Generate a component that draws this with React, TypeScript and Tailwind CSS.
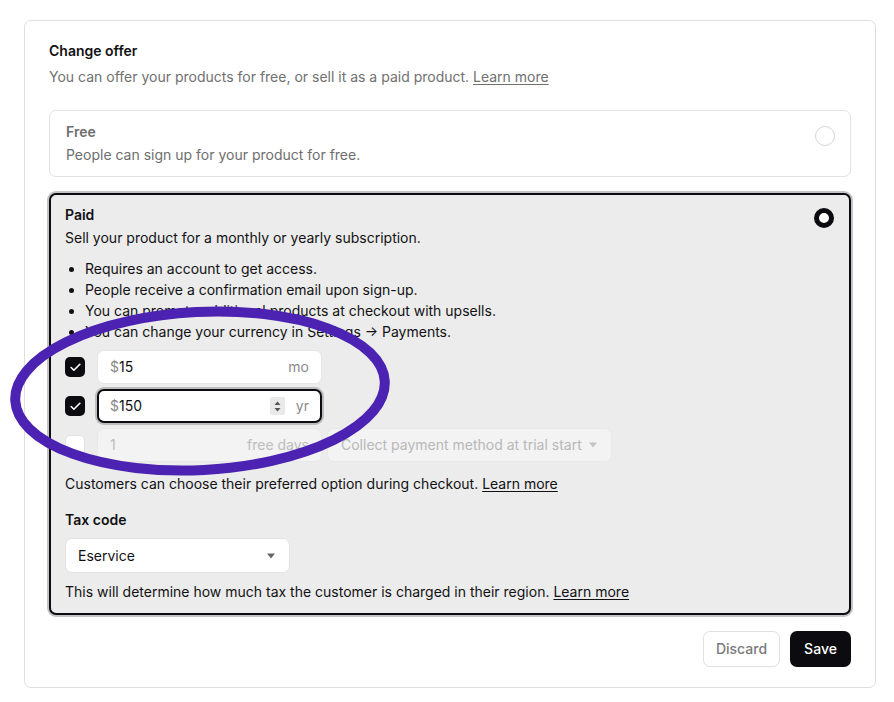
import { Check } from "lucide-react";

const Caret = ({ className }: { className?: string }) => (
  <svg width="10" height="6" viewBox="0 0 10 6" className={className}>
    <path d="M1 0.5h8L5 5.5z" fill="currentColor" />
  </svg>
);

const Spinner = () => (
  <div className="flex h-[18px] w-[15px] flex-col items-center justify-center gap-[3px] rounded-[2px] bg-[#e9e9e9]">
    <svg width="7" height="4" viewBox="0 0 7 4">
      <path d="M0.5 4L3.5 0.5 6.5 4z" fill="#555" />
    </svg>
    <svg width="7" height="4" viewBox="0 0 7 4">
      <path d="M0.5 0L3.5 3.5 6.5 0z" fill="#555" />
    </svg>
  </div>
);

const CheckBox = ({ checked }: { checked: boolean }) =>
  checked ? (
    <div className="flex h-5 w-5 shrink-0 items-center justify-center rounded-[5px] bg-[#0b0b10]">
      <Check size={13} strokeWidth={3} className="text-white" />
    </div>
  ) : (
    <div className="h-5 w-5 shrink-0 rounded-[5px] border border-[#e2e2e2] bg-white" />
  );

const App = () => {
  return (
    <div className="relative h-[702px] w-full bg-white pt-5 font-['Inter','Noto_Sans',sans-serif] text-[14px] leading-5 text-[#111113]">
      <div className="ml-6 w-[852px] rounded-[7px] border border-[#dedede] px-6 pb-5 pt-5">
        <h2 className="font-semibold">Change offer</h2>
        <p className="mt-[6px] text-[#707070]">
          You can offer your products for free, or sell it as a paid product.{" "}
          <a className="underline underline-offset-2">Learn more</a>
        </p>

        <div className="mt-[23px] flex items-start justify-between rounded-[7px] border border-[#e2e2e2] py-[11px] pl-4 pr-[15px]">
          <div>
            <div className="font-semibold text-[#6e6e6e]">Free</div>
            <div className="mt-[3px] text-[#6e6e6e]">People can sign up for your product for free.</div>
          </div>
          <div className="mt-[4px] h-5 w-5 rounded-full border border-[#d6d6d6] bg-white" />
        </div>

        <div className="mt-4 rounded-[7px] border-2 border-[#0b0b10] bg-[#ececec] px-[14px] pb-[11px] pt-[10px] ring-2 ring-[#c4c4c4]">
          <div className="flex items-start justify-between">
            <div>
              <div className="font-semibold">Paid</div>
              <div className="mt-[3px]">Sell your product for a monthly or yearly subscription.</div>
            </div>
            <div className="mr-[1px] mt-[3px] h-5 w-5 rounded-full border-[5px] border-[#0b0b10] bg-white" />
          </div>

          <ul className="mt-[10px] list-disc pl-5 leading-[21px]">
            <li>Requires an account to get access.</li>
            <li>People receive a confirmation email upon sign-up.</li>
            <li>You can promote additional products at checkout with upsells.</li>
            <li>You can change your currency in Settings → Payments.</li>
          </ul>

          <div className="mt-2 flex flex-col gap-[5px]">
            <div className="flex items-center gap-3">
              <CheckBox checked />
              <div className="flex h-[34px] w-[225px] items-center justify-between rounded-[7px] border border-[#e6e6e6] bg-white px-3">
                <span>
                  <span className="text-[#8a8a8a]">$</span>15
                </span>
                <span className="text-[#8a8a8a]">mo</span>
              </div>
            </div>
            <div className="flex items-center gap-3">
              <CheckBox checked />
              <div className="flex h-[34px] w-[225px] items-center rounded-[7px] border-2 border-[#0b0b10] bg-white pl-[11px] pr-[11px] ring-2 ring-[#bdbdbd]">
                <span className="flex-1">
                  <span className="text-[#8a8a8a]">$</span>150
                </span>
                <Spinner />
                <span className="ml-[11px] text-[#8a8a8a]">yr</span>
              </div>
            </div>
            <div className="flex items-center gap-3">
              <CheckBox checked={false} />
              <div className="flex h-[34px] w-[225px] items-center justify-between rounded-[7px] border border-[#e8e8e8] bg-[#f3f3f3] px-3 text-[#bdbdbd]">
                <span>1</span>
                <span>free days</span>
              </div>
              <div className="-ml-[7px] flex h-[34px] w-[285px] items-center justify-between rounded-[7px] border border-[#e8e8e8] bg-[#f3f3f3] pl-[13px] pr-[13px] text-[#b8b8b8]">
                <span>Collect payment method at trial start</span>
                <Caret className="text-[#c4c4c4]" />
              </div>
            </div>
          </div>

          <p className="mt-3">
            Customers can choose their preferred option during checkout.{" "}
            <a className="underline underline-offset-2">Learn more</a>
          </p>

          <div className="mt-4 font-semibold">Tax code</div>
          <div className="mt-2 flex h-[35px] w-[225px] items-center justify-between rounded-[7px] border border-[#e2e2e2] bg-white pl-3 pr-[13px]">
            <span>Eservice</span>
            <Caret className="text-[#666]" />
          </div>
          <p className="mt-[9px]">
            This will determine how much tax the customer is charged in their region.{" "}
            <a className="underline underline-offset-2">Learn more</a>
          </p>
        </div>

        <div className="mt-4 flex justify-end gap-[10px]">
          <button className="h-9 w-[77px] rounded-[7px] border border-[#e0e0e0] bg-white font-medium text-[#7a7a7a]">
            Discard
          </button>
          <button className="h-9 w-[61px] rounded-[7px] bg-[#0b0b10] font-medium text-white">Save</button>
        </div>
      </div>

      <svg
        className="pointer-events-none absolute left-0 top-0"
        width="894"
        height="702"
        viewBox="0 0 894 702"
      >
        <ellipse
          cx="200"
          cy="391"
          rx="185"
          ry="79"
          fill="none"
          stroke="#4b22b1"
          strokeWidth="10"
          transform="rotate(-3 200 391)"
        />
      </svg>
    </div>
  );
};

export default App;
